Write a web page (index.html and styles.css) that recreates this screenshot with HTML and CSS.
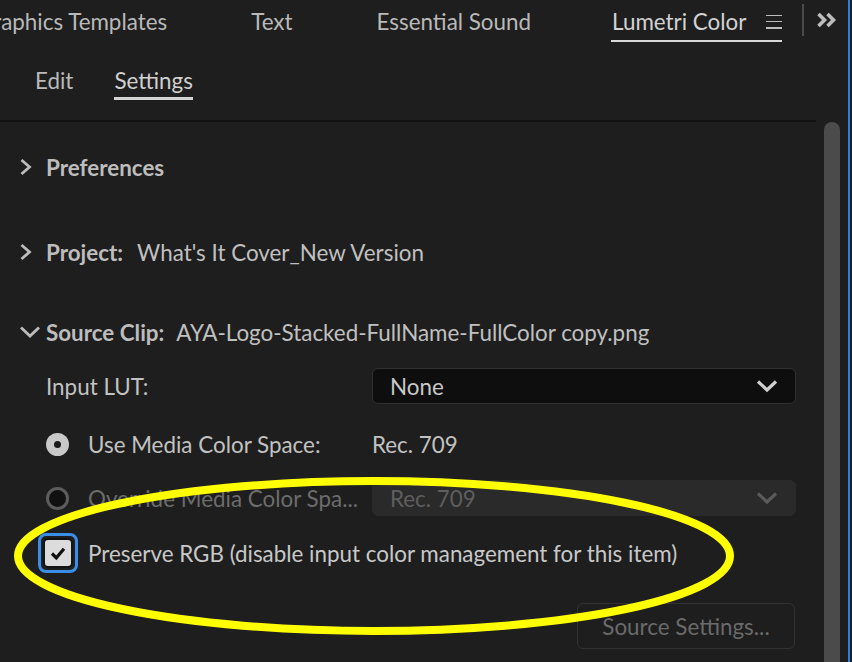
FILE: index.html
```html
<!DOCTYPE html>
<html>
<head>
<meta charset="utf-8">
<link rel="stylesheet" href="styles.css">
</head>
<body>
<div class="app">
  <div class="panel">
    <header class="tabbar">
      <span class="tab">Graphics Templates</span>
      <span class="tab">Text</span>
      <span class="tab tab-last">Essential Sound</span>
      <span class="tab tab-active">Lumetri Color
        <span class="hamburger"><i></i><i></i><i></i></span>
      </span>
      <span class="vsep"></span>
      <svg class="more" width="22" height="16" viewBox="0 0 22 16"><path d="M2.5 2 L8.5 8 L2.5 14 M11.5 2 L17.5 8 L11.5 14" fill="none" stroke="#bcbcbc" stroke-width="3.6"/></svg>
    </header>
    <nav class="subtabs">
      <span class="subtab">Edit</span>
      <span class="subtab subtab-active">Settings</span>
    </nav>
    <div class="divider"></div>
    <div class="body">
      <main class="content">
        <div class="section sec-pref">
          <svg class="chev" width="14" height="18" viewBox="0 0 14 18"><path d="M2.5 2 L10.5 9 L2.5 16" fill="none" stroke="#bcbcbc" stroke-width="2.8"/></svg>
          <span class="sec-title">Preferences</span>
        </div>
        <div class="section sec-proj">
          <svg class="chev" width="14" height="18" viewBox="0 0 14 18"><path d="M2.5 2 L10.5 9 L2.5 16" fill="none" stroke="#bcbcbc" stroke-width="2.8"/></svg>
          <span class="sec-title">Project:</span>
          <span class="sec-value">What's It Cover_New Version</span>
        </div>
        <div class="section sec-src">
          <svg class="chev-down" width="22" height="14" viewBox="0 0 22 14"><path d="M2 2.5 L11 11 L20 2.5" fill="none" stroke="#bcbcbc" stroke-width="2.8"/></svg>
          <span class="sec-title">Source Clip:</span>
          <span class="sec-value src-value">AYA-Logo-Stacked-FullName-FullColor copy.png</span>
        </div>

        <div class="row row-lut">
          <span class="label">Input LUT:</span>
          <div class="select">
            <span>None</span>
            <svg width="22" height="14" viewBox="0 0 22 14"><path d="M2 2.5 L11 11 L20 2.5" fill="none" stroke="#cfcfcf" stroke-width="3.2"/></svg>
          </div>
        </div>
        <div class="row row-media">
          <span class="label with-control"><span class="radio radio-on"></span>Use Media Color Space:</span>
          <span class="value">Rec. 709</span>
        </div>
        <div class="row row-override">
          <span class="label with-control disabled"><span class="radio radio-off"></span>Override Media Color Spa...</span>
          <div class="select select-disabled">
            <span>Rec. 709</span>
            <svg width="22" height="14" viewBox="0 0 22 14"><path d="M2 2.5 L11 11 L20 2.5" fill="none" stroke="#5a5a5a" stroke-width="3.2"/></svg>
          </div>
        </div>
        <div class="row row-preserve">
          <span class="checkbox-ring"><span class="checkbox">
            <svg width="20" height="20" viewBox="0 0 20 20"><path d="M4 10.5 L8.3 14.8 L16 5.8" fill="none" stroke="#111111" stroke-width="3.2"/></svg>
          </span></span>
          <span class="check-label">Preserve RGB (disable input color management for this item)</span>
        </div>
        <div class="row row-button">
          <button class="btn">Source Settings...</button>
        </div>
      </main>
      <div class="scrollbar"><div class="thumb"></div></div>
    </div>
  </div>
  <div class="edge"></div>
  <svg class="highlight" width="852" height="662" viewBox="0 0 852 662">
    <ellipse cx="374" cy="556" rx="356" ry="75" fill="none" stroke="#ffff00" stroke-width="8"/>
  </svg>
</div>
</body>
</html>
```

FILE: styles.css
```css
* { box-sizing: border-box; }
html, body {
  margin: 0;
  padding: 0;
  background: #1e1e1e;
}
body {
  width: 852px;
  height: 662px;
  overflow: hidden;
  font-family: Lato, "Open Sans", sans-serif;
  color: #c2c2c2;
  font-size: 22.4px;
}
.app {
  position: relative;
  display: flex;
  width: 852px;
  height: 662px;
  background: #1e1e1e;
}
.panel {
  width: 848px;
  display: flex;
  flex-direction: column;
  overflow: hidden;
}
.edge {
  width: 2px;
  background: #2f7fe0;
}

/* top tab bar */
.tabbar {
  height: 42px;
  display: flex;
  align-items: stretch;
  margin-left: -23px;
  white-space: nowrap;
}
.tab {
  display: flex;
  align-items: center;
  font-size: 22.4px;
  color: #b9b9b9;
  margin-right: 84px;
}
.tab-last { margin-right: 80px; }
.tab-active {
  color: #d2d2d2;
  margin-right: 0;
  border-bottom: 2px solid #d8d8d8;
  padding-left: 1px;
  padding-top: 2px;
}
.hamburger {
  display: flex;
  flex-direction: column;
  justify-content: space-between;
  width: 16px;
  height: 14px;
  margin-left: 20px;
  margin-top: 1px;
}
.hamburger i {
  display: block;
  height: 1.6px;
  background: #bdbdbd;
}
.vsep {
  width: 2px;
  height: 32px;
  margin-top: 4px;
  margin-left: 20px;
  background: #4a4a4a;
}
.more {
  margin-left: 12px;
  margin-top: 12px;
}

/* sub tabs */
.subtabs {
  height: 78px;
  display: flex;
  align-items: flex-start;
  padding-left: 35px;
  padding-top: 25px;
  gap: 41px;
}
.subtab {
  font-size: 22.4px;
  color: #b9b9b9;
  line-height: 27px;
}
.subtab-active {
  color: #d0d0d0;
  padding-bottom: 3px;
  border-bottom: 3px solid #d4d4d4;
}
.divider {
  width: 816px;
  height: 2px;
  background: #111111;
}

/* body */
.body {
  flex: 1;
  display: flex;
}
.content {
  width: 824px;
  display: flex;
  flex-direction: column;
}
.scrollbar {
  width: 16px;
  margin-right: 8px;
}
.thumb {
  height: 100%;
  background: #4b4b4b;
  border-radius: 8px 8px 0 0;
}

.section {
  height: 40px;
  display: flex;
  align-items: center;
  padding-left: 19px;
}
.sec-pref { margin-top: 25px; }
.sec-proj { margin-top: 45px; }
.sec-src { margin-top: 40px; }
.chev { margin-right: 13px; }
.chev-down { margin-right: 5px; }
.sec-title {
  font-weight: 700;
  color: #bdbdbd;
}
.sec-value {
  margin-left: 14px;
  color: #c0c0c0;
}
.src-value { margin-left: 12px; }

.row {
  display: flex;
  align-items: center;
  padding-left: 46px;
}
.label {
  width: 326px;
  display: flex;
  align-items: center;
  white-space: nowrap;
}
.with-control { gap: 19px; }
.disabled { color: #6c6c6c; }
.value { color: #c2c2c2; }

.row-lut { margin-top: 16px; height: 36px; }
.row-media { margin-top: 22px; height: 36px; }
.row-override { margin-top: 18px; height: 36px; }
.row-preserve { margin-top: 17px; height: 40px; padding-left: 38px; }
.row-button { margin-top: 30px; height: 46px; justify-content: flex-end; padding-right: 29px; }

.select {
  width: 424px;
  height: 36px;
  border-radius: 6px;
  background: #0e0e0e;
  border: 1px solid #303030;
  display: flex;
  align-items: center;
  justify-content: space-between;
  padding: 0 17px 0 17px;
  color: #c8c8c8;
}
.select-disabled {
  background: #2a2a2a;
  border-color: #2a2a2a;
  color: #5e5e5e;
}

.radio {
  width: 23px;
  height: 23px;
  border-radius: 50%;
  flex: none;
  position: relative;
}
.radio-on {
  background: #c9c9c9;
}
.radio-on::after {
  content: "";
  position: absolute;
  left: 8px;
  top: 8px;
  width: 7px;
  height: 7px;
  border-radius: 50%;
  background: #1a1a1a;
}
.radio-off {
  background: #111111;
  border: 3.5px solid #5c5c5c;
}

.checkbox-ring {
  width: 40px;
  height: 40px;
  border: 3px solid #3a8ee8;
  border-radius: 8px;
  display: flex;
  align-items: center;
  justify-content: center;
  flex: none;
}
.checkbox {
  width: 30px;
  height: 30px;
  border-radius: 5px;
  background: #dcdcdc;
  border: 2.5px solid #141414;
  display: flex;
  align-items: center;
  justify-content: center;
}
.check-label {
  margin-left: 10px;
  color: #c8c8c8;
  white-space: nowrap;
}

.btn {
  width: 218px;
  height: 46px;
  background: transparent;
  border: 1.5px solid #323232;
  border-radius: 6px;
  font-family: Lato, "Open Sans", sans-serif;
  font-size: 22.4px;
  color: #6a6a6a;
  padding: 0;
}

.highlight {
  position: absolute;
  left: 0;
  top: 0;
  pointer-events: none;
}
```
